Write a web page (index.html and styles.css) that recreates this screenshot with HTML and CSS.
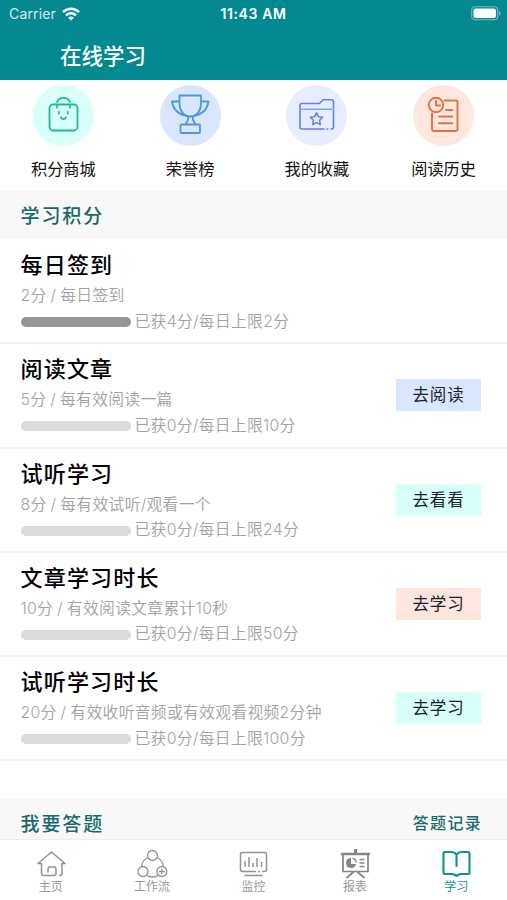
FILE: index.html
```html
<!DOCTYPE html>
<html lang="zh-CN">
<head>
<meta charset="utf-8">
<title>在线学习</title>
<link rel="stylesheet" href="styles.css">
</head>
<body>
<div class="app">
  <header class="header">
    <div class="status">
      <div class="carrier"><span>Carrier</span>
        <svg width="18" height="14" viewBox="0 0 18 14" fill="none" stroke="#fff" stroke-width="2.4"><path d="M1 5.2C5.5.6 12.5.6 17 5.2"/><path d="M4 8.4c2.8-2.8 7.2-2.8 10 0"/><path d="M6.2 10.7c1.6-1.6 4-1.6 5.6 0L9 13.6z" fill="#fff" stroke="none"/></svg>
      </div>
      <div class="clock">11:43 AM</div>
      <svg class="battery" width="30" height="15" viewBox="0 0 30 15"><rect x=".7" y=".7" width="26" height="13" rx="3.5" fill="none" stroke="#75bdc1" stroke-width="1.1"/><rect x="2.5" y="2.5" width="22.4" height="9.4" rx="2" fill="#fff"/><path d="M28 5c2 .8 2 4 0 4.8z" fill="#75bdc1"/></svg>
    </div>
    <h1 class="title">在线学习</h1>
  </header>

  <nav class="shortcuts">
    <a class="shortcut"><span class="disc mint">
      <svg width="61" height="61" viewBox="0 0 61 61" fill="none" stroke="#1fb89f" stroke-width="1.8" stroke-linecap="round"><rect x="16.500" y="19.500" width="28" height="26" rx="3.5"/><path d="M24 22.500v-1.500M37 22.500v-1.500M24 17c2-5.500 11-5.500 13 0M25.800 26.800v1.700M34.800 26.800v1.700M28 32.300c1 2.500 4 2.500 5 0"/></svg></span><span>积分商城</span></a>
    <a class="shortcut"><span class="disc blue">
      <svg width="61" height="61" viewBox="0 0 61 61" fill="none" stroke="#4a98e6" stroke-width="1.8" stroke-linejoin="round"><path d="M19.500 10.500h21.500v8c0 7-4 13-10.700 13s-10.800-6-10.800-13z"/><path d="M19.500 16.500H12c1 7 6 13 15.500 14.500M41 16.500h7.500c-1 7-6 13-15.500 14.500M28.500 31.500c0 3-1 5.500-3 8M32.500 31.500c0 3 1 5.500 3 8"/><rect x="20.500" y="39.500" width="19.500" height="8.500" rx="1"/></svg></span><span>荣誉榜</span></a>
    <a class="shortcut"><span class="disc lilac">
      <svg width="61" height="61" viewBox="0 0 61 61" fill="none" stroke="#5b83ef" stroke-width="1.600" stroke-linejoin="round" stroke-linecap="round"><path d="M38 44H16q-2 0-2-2V20.500q0-2 2-2h17.500l3.500-3.700h8.500q2 0 2 2V42q0 2-2 2H45M41 44h.8"/><path d="M14 24.200h33.500" stroke="#74acf4"/><path d="M30.500 27.800l1.900 3.900 4.300.6-3.100 3 .7 4.300-3.800-2-3.800 2 .7-4.300-3.100-3 4.300-.6z"/></svg></span><span>我的收藏</span></a>
    <a class="shortcut"><span class="disc peach">
      <svg width="61" height="61" viewBox="0 0 61 61" fill="none" stroke="#df7048" stroke-width="1.900" stroke-linejoin="round" stroke-linecap="round"><circle cx="23" cy="20" r="7.200"/><path d="M23 15.800v4.700h4M31.500 15.500H43q1.500 0 1.500 1.500v27.500q0 1.500-1.500 1.500H20.500q-1.500 0-1.500-1.500V28.500M33 25h6.300M26 31.500h13.300M26 38.300h13.300"/></svg></span><span>阅读历史</span></a>
  </nav>

  <div class="section"><h2>学习积分</h2></div>
  <main class="tasks">
    <div class="task"><div><h3>每日签到</h3><p>2分 / 每日签到</p><div class="progress"><i class="bar full"></i><span>已获4分/每日上限2分</span></div></div></div>
    <div class="task"><div><h3>阅读文章</h3><p>5分 / 每有效阅读一篇</p><div class="progress"><i class="bar"></i><span>已获0分/每日上限10分</span></div></div><button class="go blue">去阅读</button></div>
    <div class="task"><div><h3>试听学习</h3><p>8分 / 每有效试听/观看一个</p><div class="progress"><i class="bar"></i><span>已获0分/每日上限24分</span></div></div><button class="go mint">去看看</button></div>
    <div class="task"><div><h3>文章学习时长</h3><p>10分 / 有效阅读文章累计10秒</p><div class="progress"><i class="bar"></i><span>已获0分/每日上限50分</span></div></div><button class="go peach">去学习</button></div>
    <div class="task"><div><h3>试听学习时长</h3><p>20分 / 有效收听音频或有效观看视频2分钟</p><div class="progress"><i class="bar"></i><span>已获0分/每日上限100分</span></div></div><button class="go mint">去学习</button></div>
  </main>
  <div class="section quiz"><h2>我要答题</h2><a>答题记录</a></div>

  <footer class="tabs">
    <a class="tab"><svg width="32" height="30" viewBox="0 0 32 30" fill="none" stroke="#929292" stroke-width="1.500" stroke-linecap="round" stroke-linejoin="round"><path d="M3 14.500L16.500 3 30 14.500H27V24q0 2.500-2.500 2.500M3 14.500h3.500V24.500q0 2 2 2H19q2 0 2-2V20q0-2-2-2h-4q-2 0-2 2v3"/></svg><span>主页</span></a>
    <a class="tab"><svg width="32" height="30" viewBox="0 0 32 30" fill="none" stroke="#929292" stroke-width="1.300"><circle cx="16.500" cy="6.500" r="5"/><circle cx="7" cy="22.500" r="5"/><circle cx="25.800" cy="22.500" r="5"/><path d="M11.800 8.500C7.500 11 5.500 14 6 17.500M21 8.500c4.500 2.500 6.500 5.500 6 9M11 26.500c3 2 8 2 11 0M22.800 22.500h6M25.800 19.500v6"/></svg><span>工作流</span></a>
    <a class="tab"><svg width="32" height="30" viewBox="0 0 32 30" fill="none" stroke="#929292" stroke-width="1.500"><path d="M19 22.500H5.500q-2 0-2-2v-15q0-2 2-2h22q2 0 2 2v15q0 2-2 2H25M21 22.500h2M8 12v6M12 8v10M16 14v4M20 9v9M24.500 13v5M7.500 26.500h18"/></svg><span>监控</span></a>
    <a class="tab"><svg width="32" height="30" viewBox="0 0 32 30" fill="none" stroke="#858585" stroke-width="1.700"><path d="M2 5h29" stroke-width="2.500"/><path d="M16.500 0v5" stroke-width="3"/><path d="M4 5v17.500h25V5M14.500 23l-7 6M18.500 23l7 6"/><path d="M12 9a5 5 0 1 0 5 6h-5z" fill="#858585" stroke="none"/><path d="M13.500 9.500a4 4 0 0 1 3.500 4M20.500 10.500h5M20.500 14h5M20.500 17.500h5" stroke-width="1.300"/></svg><span>报表</span></a>
    <a class="tab active"><svg width="32" height="30" viewBox="0 0 32 30" fill="none" stroke="#118f98" stroke-width="2.100" stroke-linejoin="round" stroke-linecap="round"><path d="M16.500 17V5.500C15 3.500 13.500 3 11.500 3H5Q3.500 3 3.500 4.500v19Q3.500 25 5 25h6.500c2 0 3.500.5 5 2 1.500-1.500 3-2 5-2H28q1.500 0 1.500-1.500v-19Q29.500 3 28 3h-6.500c-2 0-3.500.5-5 2.500"/></svg><span>学习</span></a>
  </footer>
</div>
</body>
</html>
```
FILE: styles.css
```css
* { box-sizing: border-box; }
body { margin: 0; font-family: Inter, "Noto Sans CJK SC", sans-serif; background: #fff; color: #111; }
h1, h2, h3, p { margin: 0; }
.app { width: 507px; height: 900px; display: flex; flex-direction: column; overflow: hidden; }
.header { height: 80px; flex: none; background: #058991; color: #fff; }
.status { height: 27px; padding: 0 6px 0 9px; display: grid; grid-template-columns: 1fr auto 1fr; align-items: center; }
.carrier { display: flex; align-items: center; gap: 6px; font-size: 14px; letter-spacing: .15px; color: #d8eeee; }
.clock { font-size: 14px; font-weight: 600; letter-spacing: .6px; margin-left: -3px; }
.battery { justify-self: end; }
.title { padding-left: 60px; font-size: 21.5px; font-weight: 500; line-height: 59px; }
.shortcuts { height: 110px; flex: none; display: grid; grid-template-columns: repeat(4, 1fr); padding-top: 5px; }
.shortcut { display: flex; flex-direction: column; align-items: center; gap: 11px; font-size: 16.2px; line-height: 24px; }
.disc { width: 61px; height: 61px; border-radius: 50%; }
.disc svg { display: block; }
.mint { background: #d8fff9; }
.blue { background: #d9e7fe; }
.lilac { background: #e9edff; }
.peach { background: #ffe6df; }
.section { height: 49px; flex: none; padding: 0 25px 0 20.5px; display: flex; align-items: center; justify-content: space-between; background: #f8f8f8; color: #18696c; }
.section h2 { font-size: 19px; font-weight: 500; letter-spacing: 1.9px; }
.section a { font-size: 16px; font-weight: 500; letter-spacing: 1.3px; }
.tasks { height: 559px; padding-top: 1px; flex: none; }
.task { height: 104.3px; padding: 9px 26px 0 20.5px; display: flex; justify-content: space-between; align-items: flex-start; border-bottom: 2px solid #f3f3f3; }
.task h3 { font-size: 22px; font-weight: 500; line-height: 32px; letter-spacing: 1.2px; color: #000; }
.task p, .progress { font-size: 15.8px; line-height: 26px; letter-spacing: .3px; color: #a2a2a2; font-weight: 350; }
.task p { padding-top: 1px; line-height: 27px; word-spacing: -.8px; }
.progress { height: 25px; display: flex; align-items: center; gap: 4px; }
.bar { width: 110px; height: 10px; margin-top: 1px; border-radius: 5px; background: #dbdbdb; }
.bar.full { background: #969696; }
.go { width: 85px; height: 32px; margin-top: 26px; padding: 0; border: 0; font: inherit; font-size: 16.5px; line-height: 32px; letter-spacing: .8px; color: #15202a; }
.quiz { height: 41px; padding-top: 7px; }
.tabs { height: 61px; flex: none; display: grid; grid-template-columns: repeat(5, 1fr); border-top: 1px solid #ececec; background: #fff; }
.tab { padding-top: 9px; display: flex; flex-direction: column; align-items: center; color: #999; font-size: 12px; line-height: 16px; }
.active { color: #118f98; }
```
